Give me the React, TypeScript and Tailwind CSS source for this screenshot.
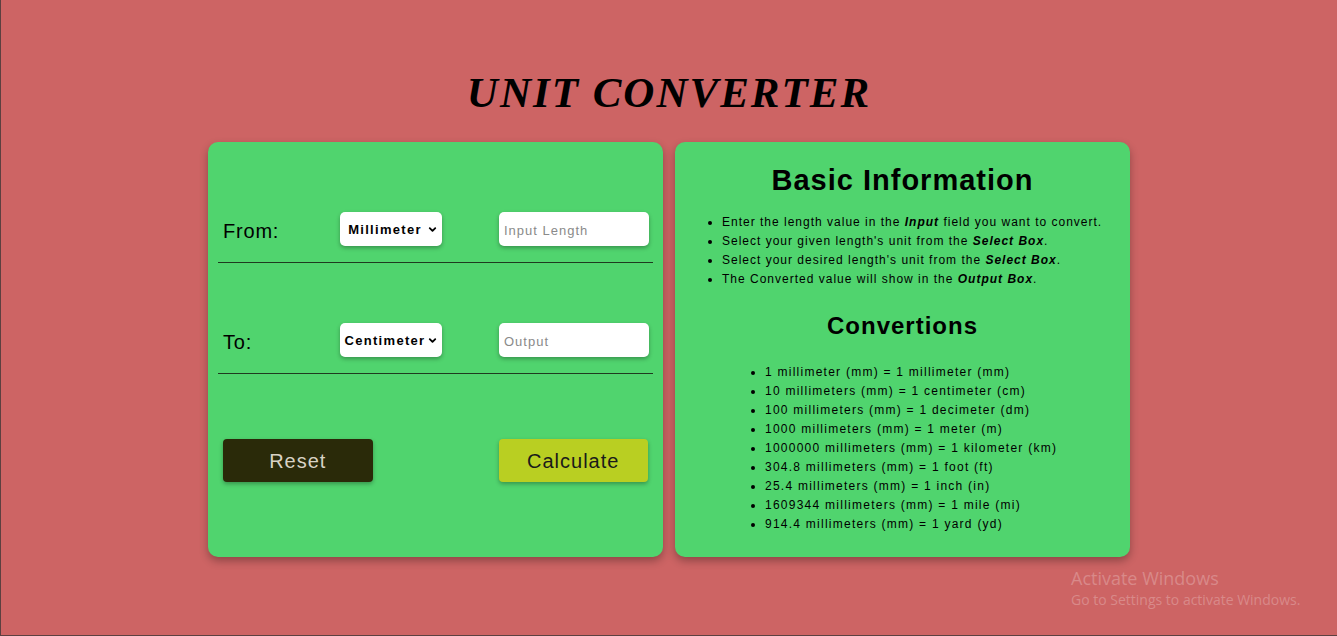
import { ChevronDown } from 'lucide-react';

const info = [
  <>Enter the length value in the <b><i>Input</i></b> field you want to convert.</>,
  <>Select your given length's unit from the <b><i>Select Box</i></b>.</>,
  <>Select your desired length's unit from the <b><i>Select Box</i></b>.</>,
  <>The Converted value will show in the <b><i>Output Box</i></b>.</>,
];

const conversions = [
  '1 millimeter (mm) = 1 millimeter (mm)',
  '10 millimeters (mm) = 1 centimeter (cm)',
  '100 millimeters (mm) = 1 decimeter (dm)',
  '1000 millimeters (mm) = 1 meter (m)',
  '1000000 millimeters (mm) = 1 kilometer (km)',
  '304.8 millimeters (mm) = 1 foot (ft)',
  '25.4 millimeters (mm) = 1 inch (in)',
  '1609344 millimeters (mm) = 1 mile (mi)',
  '914.4 millimeters (mm) = 1 yard (yd)',
];

function UnitSelect({ value }: { value: string }) {
  return (
    <div className="relative w-[102px] h-[34px]">
      <select
        defaultValue={value}
        className="appearance-none w-full h-full rounded-[5px] bg-white shadow-[0_2px_4px_rgba(0,0,0,0.3)] pl-[2px] pr-[14px] pt-[2px] text-center [text-align-last:center] text-[13px] font-bold tracking-[1.3px] text-black outline-none"
      >
        <option>Millimeter</option>
        <option>Centimeter</option>
        <option>Decimeter</option>
        <option>Meter</option>
        <option>Kilometer</option>
        <option>Foot</option>
        <option>Inch</option>
        <option>Mile</option>
        <option>Yard</option>
      </select>
      <ChevronDown className="absolute right-[4px] top-[12px] w-[11px] h-[11px] pointer-events-none" strokeWidth={4} />
    </div>
  );
}

function Row({ label, value, placeholder }: { label: string; value: string; placeholder: string }) {
  return (
    <div className="flex items-center h-[34px]">
      <span className="w-[122px] pl-[5px] pt-[4px] text-[20px] tracking-[0.8px] text-black">{label}</span>
      <UnitSelect value={value} />
      <input
        placeholder={placeholder}
        className="ml-[57px] w-[150px] h-[34px] rounded-[5px] bg-white shadow-[0_2px_4px_rgba(0,0,0,0.3)] px-[5px] pt-[2px] text-[13px] tracking-[1px] placeholder:text-[#8a8a8a] outline-none"
      />
    </div>
  );
}

export default function App() {
  return (
    <div
      className="relative h-[636px] overflow-hidden bg-[#cd6464] border-l border-b border-[#5c4040] flex flex-col items-center"
      style={{ fontFamily: '"Liberation Sans", Arial, sans-serif' }}
    >
      <h1
        className="mt-[68px] text-[43px] leading-[50px] font-bold italic tracking-[2px] text-black"
        style={{ fontFamily: '"Liberation Serif", "Times New Roman", serif' }}
      >
        UNIT CONVERTER
      </h1>

      <div className="mt-[24px] flex gap-[12px]">
        {/* converter card */}
        <div className="w-[455px] h-[415px] rounded-[10px] bg-[#50d46e] shadow-[0_4px_8px_rgba(0,0,0,0.3)] px-[10px] pt-[70px]">
          <div className="pb-[16px] border-b border-[#1f3a1f]">
            <Row label="From:" value="Millimeter" placeholder="Input Length" />
          </div>
          <div className="pt-[60px] pb-[16px] border-b border-[#1f3a1f]">
            <Row label="To:" value="Centimeter" placeholder="Output" />
          </div>
          <div className="mt-[65px] flex px-[5px]">
            <button className="w-[150px] h-[43px] rounded-[4px] bg-[#2a2a09] text-[#d8d2c4] text-[20px] tracking-[1px] shadow-[0_2px_4px_rgba(0,0,0,0.3)]">
              Reset
            </button>
            <button className="ml-[126px] w-[150px] h-[43px] rounded-[4px] bg-[#b9cf22] text-[#1a1a1a] text-[20px] tracking-[1px] shadow-[0_2px_4px_rgba(0,0,0,0.3)]">
              Calculate
            </button>
          </div>
        </div>

        {/* info card */}
        <div className="w-[455px] h-[415px] rounded-[10px] bg-[#50d46e] shadow-[0_4px_8px_rgba(0,0,0,0.3)] pt-[20px] text-black">
          <h2 className="text-center text-[29px] leading-[36px] font-bold tracking-[1px]">Basic Information</h2>
          <ul className="mt-[15px] pl-[47px] list-disc text-[12px] leading-[19px] tracking-[1px]">
            {info.map((item, i) => (
              <li key={i}>{item}</li>
            ))}
          </ul>
          <h2 className="mt-[22px] text-center text-[24px] leading-[30px] font-bold tracking-[1px]">Convertions</h2>
          <ul className="mt-[22px] pl-[90px] list-disc text-[12px] leading-[19px] tracking-[1.25px]">
            {conversions.map((c) => (
              <li key={c}>{c}</li>
            ))}
          </ul>
        </div>
      </div>

      <div
        className="absolute left-[1070px] top-[566px] text-white/25 pointer-events-none"
        style={{ fontFamily: '"Open Sans", "Noto Sans", sans-serif' }}
      >
        <div className="text-[18px] leading-[24px]">Activate Windows</div>
        <div className="text-[14px] leading-[20px]">Go to Settings to activate Windows.</div>
      </div>
    </div>
  );
}
